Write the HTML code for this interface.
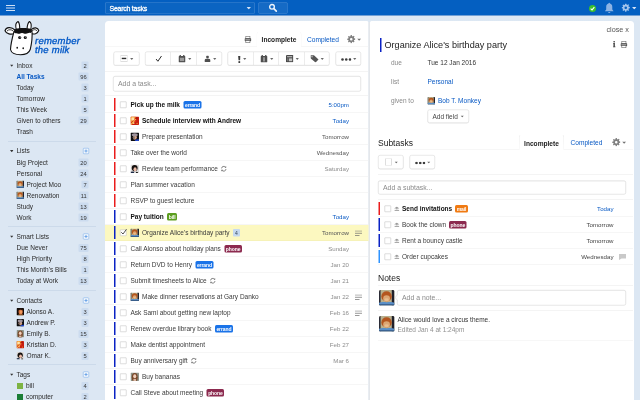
<!DOCTYPE html>
<html lang="en"><head><meta charset="utf-8"><title>Remember The Milk</title>
<style>
html,body{margin:0;padding:0;background:#dce7f3;overflow:hidden;}
body{width:640px;height:400px;position:relative;font-family:"Liberation Sans",sans-serif;}
#app{position:absolute;left:0;top:0;width:1280px;height:800px;transform:scale(0.5);transform-origin:0 0;filter:saturate(1.001);font-size:13px;color:#333;overflow:hidden;}
#app *{box-sizing:border-box;}
.abs{position:absolute;}
#topbar{position:absolute;left:0;top:0;width:1280px;height:31.5px;background:#045fc1;border-bottom:1.500px solid #0a52ab;}
#topshade{position:absolute;left:0;top:31px;width:1280px;height:11px;background:linear-gradient(#dfe8f3,#dfe8f3 60%,#dce7f3);}
.ham i{position:absolute;left:12px;width:18px;height:2px;background:#cfe0f5;}
#search{position:absolute;left:210px;top:5px;width:300px;height:22px;border:1px solid rgba(255,255,255,.26);background:rgba(255,255,255,.03);border-radius:2px;color:#fff;font-weight:normal;-webkit-text-stroke:.55px #fff;letter-spacing:-.5px;font-size:14px;line-height:20px;padding-left:8px;}
#sbtn{position:absolute;left:517px;top:5px;width:58px;height:22px;border:1px solid rgba(255,255,255,.28);background:rgba(255,255,255,.07);border-radius:2px;}
/* sidebar */
.sbrow{position:absolute;left:0;width:210px;height:22px;line-height:22px;font-size:13px;color:#2a2a2a;white-space:nowrap;}
.sbrow .lbl{position:absolute;left:33px;top:0;}
.sbrow .lbl.withav{left:53px;}
.sbrow .lbl.withtag{left:52px;}
.sbrow .av{position:absolute;left:33px;top:3px;}
.sbrow .tagsq{position:absolute;left:34px;top:5px;width:12px;height:12px;}
.sbrow .tri{position:absolute;left:20px;top:9px;}
.sbrow.act .lbl{color:#0859c4;font-weight:bold;}
.sbrow .cnt{position:absolute;right:33px;top:3px;height:16px;line-height:16px;font-size:11.500px;color:#333;background:#ccdcef;padding:0 3.500px;border-radius:2px;min-width:14px;text-align:center;}
.sbrow .plus{position:absolute;left:166px;top:5px;width:12px;height:12px;border:1px solid #6ea6e8;background:#f3f7fc;border-radius:2px;}
.sbrow .plus i{position:absolute;left:2px;top:4px;width:6px;height:2px;background:#6ea6e8;}
.sbrow .plus b{position:absolute;left:4px;top:2px;width:2px;height:6px;background:#6ea6e8;}
.sbdiv{position:absolute;left:16px;width:176px;height:1px;background:#bccde0;}
/* panels */
#main{position:absolute;left:210px;top:42px;width:527px;height:760px;background:#fff;border-radius:7px 3px 0 0;}
#right{position:absolute;left:740px;top:42px;width:528px;height:760px;background:#fff;border-radius:3px 7px 0 0;}
.hline{position:absolute;height:1px;background:#e9e9e9;}
.btn{position:absolute;height:28px;border:1px solid #d4d4d4;border-radius:4px;background:#fff;box-shadow:0 1px 1px rgba(0,0,0,.08);}
.btn .sep{position:absolute;top:0;width:1px;height:26px;background:#d9d9d9;}
.btn svg{position:absolute;}
.inp{position:absolute;border:1px solid #cfcfcf;border-radius:4px;background:#fff;color:#8a8a8a;font-size:13.800px;padding-left:9px;box-shadow:inset 0 1px 1px rgba(0,0,0,.05);}
.tab{position:absolute;border:1px solid #ededed;border-bottom:none;border-radius:4px 4px 0 0;background:#fff;font-weight:bold;color:#222;font-size:13.200px;text-align:center;}
.lnk{color:#0859c4;}
/* task rows */
.trow{position:absolute;left:210px;width:527px;height:32px;line-height:31px;border-bottom:1px solid #ececec;font-size:13px;color:#3a3a3a;white-space:nowrap;padding-left:51px;display:flex;align-items:center;}
.trow.sel{background:#fcf8c0;border-bottom-color:#f0ecb0;}
.trow .pri{position:absolute;left:18px;top:2px;width:3px;height:26px;}
.trow .cb{position:absolute;left:30px;top:9px;width:13px;height:13px;border:1px solid #bdbdbd;background:#fff;border-radius:1px;}
.trow .cb svg{position:absolute;left:-1px;top:-3px;}
.trow .av{margin-right:6px;flex:none;}
.trow .tn.b{font-weight:bold;color:#111;}
.trow .tag{margin-left:7px;height:15px;line-height:15px;font-size:10px;font-weight:bold;color:#fff;padding:0 3px;border-radius:3px;letter-spacing:-.2px;}
.trow .subcnt{margin-left:7px;height:15px;line-height:15px;font-size:10px;color:#345;background:#c5d9f0;padding:0 4px;border-radius:2px;}
.trow .rep{margin-left:5.500px;flex:none;}
.trow .due{position:absolute;right:39px;top:0;color:#8c8c8c;font-size:12.300px;}
.trow .due.nr{color:#555;}
.trow.sub .due.nr{color:#444;}
.trow .due.bl{color:#0859c4;}
.trow .nic{position:absolute;left:500px;top:11px;line-height:0;}
.trow.sub{left:756px;width:510px;padding-left:48px;}
.trow.sub .pri{left:1px;}
.trow.sub .cb{left:13px;}
.trow.sub .subic{position:absolute;left:32px;top:11px;line-height:0;}
.trow.sub .due{right:39px;}
.trow.sub .nic{left:482px;top:10px;}
.trow.sub .tag{margin-left:6px;}
#gap{position:absolute;left:737px;top:44px;width:3px;height:760px;background:#e4e7eb;}

</style></head><body>
<div id="app">
<div id="topbar">
 <div class="ham"><i style="top:10px"></i><i style="top:15px"></i><i style="top:20px"></i></div>
 <div id="search">Search tasks<span class="abs" style="right:7px;top:7.500px;line-height:0"><svg class="caret" width="9" height="5.5" viewBox="0 0 8 5"><path d="M0 0 H8 L4 4.6Z" fill="#d5e4f7"/></svg></span></div>
 <div id="sbtn"><svg class="abs" style="left:17.500px;top:0px" width="20" height="20" viewBox="0 0 20 20"><circle cx="8" cy="7.600" r="4.700" fill="none" stroke="#eef4fc" stroke-width="2.700"/><path d="M11.800 11.400 L16.600 16.200" stroke="#eef4fc" stroke-width="3.300" stroke-linecap="round"/></svg></div>
 <svg class="abs" style="left:1177.500px;top:9.500px" width="14" height="14" viewBox="0 0 15 15"><circle cx="7.500" cy="7.500" r="7.500" fill="#3cbf2c"/><path d="M3.500 7.800 L6.500 10.500 L11.500 4.500" fill="none" stroke="#fff" stroke-width="2.200"/></svg>
 <svg class="abs" style="left:1207px;top:4px" width="23" height="23" viewBox="0 0 20 20"><path d="M10 1.500c.8 0 1.300.5 1.300 1.300 2.600.7 4 2.800 4 5.700v4.500l2 2.500v.8H2.700v-.8l2-2.500V8.500c0-2.900 1.400-5 4-5.700C8.700 2 9.200 1.500 10 1.500z M8 17.300h4a2 2 0 0 1-4 0z" fill="#8db3e4"/></svg>
 <span class="abs" style="left:1242.500px;top:7px;line-height:0"><svg width="17" height="17" viewBox="0 0 16 16"><path fill-rule="evenodd" fill="#a3c4ec" d="M6.9 0h2.2l.4 2.1 1.4.6 1.8-1.2 1.5 1.5-1.200 1.800.6 1.400 2.100.4v2.200l-2.100.4-.6 1.400 1.200 1.800-1.500 1.500-1.800-1.200-1.400.6-.4 2.100H6.900l-.4-2.100-1.400-.6-1.800 1.200-1.500-1.500 1.200-1.800-.6-1.400L.3 9.100V6.900l2.100-.4.6-1.400-1.200-1.800 1.500-1.500 1.800 1.200 1.400-.6zM8 5.600a2.400 2.400 0 1 0 0 4.800 2.400 2.400 0 0 0 0-4.800z"/></svg></span>
 <span class="abs" style="left:1263.500px;top:13.500px;line-height:0"><svg class="caret" width="9" height="5.5" viewBox="0 0 8 5"><path d="M0 0 H8 L4 4.6Z" fill="#d5e4f7"/></svg></span>
</div>
<div id="topshade"></div>

<!-- logo -->
<svg class="abs" style="left:8px;top:40px" width="72" height="74" viewBox="0 0 72 74">
 <g stroke="#111" stroke-width="2.2" stroke-linejoin="round" stroke-linecap="round" fill="#fff">
  <path d="M24.500 19 C22.500 11 24.500 4.500 28 3 C31 5.500 31.500 12 31.500 18Z"/>
  <path d="M46 18 C46.500 11 48 5 51 3 C54.500 5 55 12 53.500 19Z"/>
  <path d="M22 20 C14 12.500 4 14.500 2 21.500 C5 28.500 14 29.500 21 27Z"/>
  <path d="M54 20 C60 13.500 68 15 69.500 21 C67 28 60 29 54.500 27Z"/>
  <path d="M20 23 C26 20 50 20 56 23 C57 34 55 48 52.500 59 C50 66 44 69.500 33 69.500 C22 69.500 14.500 66 13 59 C13.500 47 17 34 20 23Z"/>
 </g>
 <path d="M21.500 19 C27 15 50 15 55 19 C56 22 55 25 53 26 C50 24 47 27 44 27.500 C40 28 39 25 35.500 26 C32 27 30 28.500 27 27 C24 25.500 22 27 20.500 25.500 C20 23 20.500 21 21.500 19Z" fill="#111"/>
 <path d="M6 22 C9 18.500 15 18.500 19 22.500" fill="none" stroke="#111" stroke-width="1.6"/>
 <path d="M66 21.500 C63 18.500 59 18.500 56 22" fill="none" stroke="#111" stroke-width="1.6"/>
 <circle cx="31.400" cy="35" r="3.100" fill="#111"/><circle cx="42.600" cy="35" r="3.100" fill="#111"/>
 <circle cx="32.300" cy="34" r="1" fill="#fff"/><circle cx="43.500" cy="34" r="1" fill="#fff"/>
 <ellipse cx="26.400" cy="55.500" rx="1.600" ry="2" fill="#111"/><ellipse cx="38.400" cy="56.500" rx="1.600" ry="2" fill="#111"/>
</svg>
<div class="abs" style="left:70px;top:73px;font-size:19px;line-height:17px;font-weight:normal;font-style:italic;color:#0058c6;-webkit-text-stroke:0.7px #0058c6;letter-spacing:.45px;white-space:nowrap">remember<br>the milk</div>

<div class="sbrow hdr" style="top:120px"><svg class="tri" width="7" height="5" viewBox="0 0 9 6"><path d="M0 0H9L4.500 5.500Z" fill="#333"/></svg><span class="lbl">Inbox</span><span class="cnt">2</span></div>
<div class="sbrow act" style="top:142px"><span class="lbl">All Tasks</span><span class="cnt">96</span></div>
<div class="sbrow" style="top:164px"><span class="lbl">Today</span><span class="cnt">3</span></div>
<div class="sbrow" style="top:186px"><span class="lbl">Tomorrow</span><span class="cnt">1</span></div>
<div class="sbrow" style="top:208px"><span class="lbl">This Week</span><span class="cnt">5</span></div>
<div class="sbrow" style="top:230px"><span class="lbl">Given to others</span><span class="cnt">29</span></div>
<div class="sbrow" style="top:252px"><span class="lbl">Trash</span></div>
<div class="sbdiv" style="top:282px"></div>
<div class="sbrow hdr" style="top:291px"><svg class="tri" width="7" height="5" viewBox="0 0 9 6"><path d="M0 0H9L4.500 5.500Z" fill="#333"/></svg><span class="lbl">Lists</span><span class="plus"><i></i><b></b></span></div>
<div class="sbrow" style="top:314px"><span class="lbl">Big Project</span><span class="cnt">20</span></div>
<div class="sbrow" style="top:336px"><span class="lbl">Personal</span><span class="cnt">24</span></div>
<div class="sbrow" style="top:358px"><svg class="av" style="border-radius:1.5px" width="15" height="15" viewBox="0 0 16 16"><rect width="16" height="16" fill="#b8b08e"/><rect x="0" y="0" width="1.600" height="16" fill="#2b2b36"/><rect x="13.200" y="0" width="2.800" height="16" fill="#20202b"/><ellipse cx="7.800" cy="6.600" rx="5.400" ry="5.200" fill="#b4561f"/><ellipse cx="7.800" cy="8.800" rx="3.500" ry="3.400" fill="#dca673"/><ellipse cx="7.800" cy="10" rx="2.200" ry="1.500" fill="#e9bd8e"/><path d="M0 16 V13.200 C3 11.800 5 12.600 8 12.600 C11 12.600 13 11.800 16 13.200 V16Z" fill="#5a8fc8"/><rect y="15" width="16" height="1" fill="#1d3557"/></svg><span class="lbl withav">Project Moo</span><span class="cnt">7</span></div>
<div class="sbrow" style="top:380px"><svg class="av" style="border-radius:1.5px" width="15" height="15" viewBox="0 0 16 16"><rect width="16" height="16" fill="#b8b08e"/><rect x="0" y="0" width="1.600" height="16" fill="#2b2b36"/><rect x="13.200" y="0" width="2.800" height="16" fill="#20202b"/><ellipse cx="7.800" cy="6.600" rx="5.400" ry="5.200" fill="#b4561f"/><ellipse cx="7.800" cy="8.800" rx="3.500" ry="3.400" fill="#dca673"/><ellipse cx="7.800" cy="10" rx="2.200" ry="1.500" fill="#e9bd8e"/><path d="M0 16 V13.200 C3 11.800 5 12.600 8 12.600 C11 12.600 13 11.800 16 13.200 V16Z" fill="#5a8fc8"/><rect y="15" width="16" height="1" fill="#1d3557"/></svg><span class="lbl withav">Renovation</span><span class="cnt">11</span></div>
<div class="sbrow" style="top:402px"><span class="lbl">Study</span><span class="cnt">13</span></div>
<div class="sbrow" style="top:424px"><span class="lbl">Work</span><span class="cnt">19</span></div>
<div class="sbdiv" style="top:453px"></div>
<div class="sbrow hdr" style="top:462px"><svg class="tri" width="7" height="5" viewBox="0 0 9 6"><path d="M0 0H9L4.500 5.500Z" fill="#333"/></svg><span class="lbl">Smart Lists</span><span class="plus"><i></i><b></b></span></div>
<div class="sbrow" style="top:485px"><span class="lbl">Due Never</span><span class="cnt">75</span></div>
<div class="sbrow" style="top:507px"><span class="lbl">High Priority</span><span class="cnt">8</span></div>
<div class="sbrow" style="top:529px"><span class="lbl">This Month's Bills</span><span class="cnt">1</span></div>
<div class="sbrow" style="top:551px"><span class="lbl">Today at Work</span><span class="cnt">13</span></div>
<div class="sbdiv" style="top:581px"></div>
<div class="sbrow hdr" style="top:590px"><svg class="tri" width="7" height="5" viewBox="0 0 9 6"><path d="M0 0H9L4.500 5.500Z" fill="#333"/></svg><span class="lbl">Contacts</span><span class="plus"><i></i><b></b></span></div>
<div class="sbrow" style="top:613px"><svg class="av" style="border-radius:1.5px" width="15" height="15" viewBox="0 0 16 16"><rect width="16" height="16" fill="#120b08"/><ellipse cx="8.800" cy="8" rx="4.500" ry="5.800" fill="#d9703a"/><ellipse cx="9.600" cy="8.500" rx="2.600" ry="3.600" fill="#f09a5e"/><path d="M4 3.500 C6 0.500 12 0.500 13.500 4 L12 5 C10 3.500 7 3.500 5 5Z" fill="#2a1710"/><rect x="4" y="14" width="10" height="2" fill="#e08a3a"/></svg><span class="lbl withav">Alonso A.</span><span class="cnt">3</span></div>
<div class="sbrow" style="top:635px"><svg class="av" style="border-radius:1.5px" width="15" height="15" viewBox="0 0 16 16"><rect width="16" height="16" fill="#0e0e10"/><ellipse cx="8.200" cy="9" rx="3.700" ry="4.600" fill="#d3a287"/><ellipse cx="6.300" cy="9.500" rx="1.700" ry="3.600" fill="#7f6a62"/><ellipse cx="8" cy="4.300" rx="5.600" ry="3" fill="#a0949c"/><path d="M8 16 L10 13 L16 12.500 V16Z" fill="#2348cc"/></svg><span class="lbl withav">Andrew P.</span><span class="cnt">3</span></div>
<div class="sbrow" style="top:657px"><svg class="av" style="border-radius:1.5px" width="15" height="15" viewBox="0 0 16 16"><rect width="16" height="16" fill="#8f968b"/><ellipse cx="8" cy="9" rx="5.600" ry="8" fill="#7a492b"/><ellipse cx="8" cy="7" rx="2.900" ry="3.700" fill="#f1d0bb"/><rect x="5.500" y="12" width="5" height="4" fill="#d9b8a4"/></svg><span class="lbl withav">Emily B.</span><span class="cnt">15</span></div>
<div class="sbrow" style="top:679px"><svg class="av" style="border-radius:1.5px" width="15" height="15" viewBox="0 0 16 16"><rect width="16" height="16" fill="#c71d10"/><path d="M0 0H11L0 12Z" fill="#f6a13a"/><circle cx="4.500" cy="4.500" r="3" fill="#ffe3a6"/><path d="M1 15 L10 5" stroke="#f7b64c" stroke-width="2.400"/><circle cx="9.500" cy="8.500" r="1.800" fill="#e0301a"/><circle cx="12" cy="3" r="1.600" fill="#a3140c"/><circle cx="6" cy="12.500" r="1.500" fill="#ffd98f"/><circle cx="12.500" cy="13" r="1.400" fill="#f08a2a"/></svg><span class="lbl withav">Kristian D.</span><span class="cnt">3</span></div>
<div class="sbrow" style="top:701px"><svg class="av" style="border-radius:1.5px" width="15" height="15" viewBox="0 0 16 16"><rect width="16" height="16" fill="#dedcda"/><ellipse cx="7.800" cy="6.800" rx="5.600" ry="5.800" fill="#15100e"/><ellipse cx="8.600" cy="9" rx="3" ry="3.900" fill="#ebbaa6"/><path d="M0 16 V13.500 L6 13 L7 16Z" fill="#1d2b48"/><path d="M10 16 L11 13.500 L14 14.500 V16Z" fill="#111"/></svg><span class="lbl withav">Omar K.</span><span class="cnt">5</span></div>
<div class="sbdiv" style="top:729px"></div>
<div class="sbrow hdr" style="top:738px"><svg class="tri" width="7" height="5" viewBox="0 0 9 6"><path d="M0 0H9L4.500 5.500Z" fill="#333"/></svg><span class="lbl">Tags</span><span class="plus"><i></i><b></b></span></div>
<div class="sbrow" style="top:761px"><span class="tagsq" style="background:#7db343"></span><span class="lbl withtag">bill</span><span class="cnt">4</span></div>
<div class="sbrow" style="top:783px"><span class="tagsq" style="background:#1a7d36"></span><span class="lbl withtag">computer</span><span class="cnt">2</span></div>

<div id="main"></div>
<div id="right"></div>
<div id="gap"></div>

<!-- main header -->
<span class="abs" style="left:489px;top:72px;line-height:0"><svg width="13.500" height="14" viewBox="0 0 13.500 14"><rect x="2.600" y="0.600" width="8.300" height="5" fill="#fff" stroke="#6a6a6a" stroke-width="1.200"/><rect x="0" y="4.600" width="13.500" height="6" rx="1.600" fill="#4d4d4d"/><rect x="1.800" y="7" width="9.900" height="1" fill="#e6e6e6"/><rect x="2.600" y="9.200" width="8.300" height="4.200" fill="#fff" stroke="#6a6a6a" stroke-width="1.200"/></svg></span>
<div class="tab" style="left:513px;top:64px;width:90px;height:30px;line-height:30px">Incomplete</div>
<div class="abs lnk" style="left:614px;top:65px;font-size:13.200px;line-height:28px">Completed</div>
<span class="abs" style="left:694px;top:70px;line-height:0"><svg width="17" height="17" viewBox="0 0 16 16"><path fill-rule="evenodd" fill="#808080" d="M6.9 0h2.2l.4 2.1 1.4.6 1.8-1.2 1.5 1.5-1.200 1.800.6 1.400 2.100.4v2.200l-2.100.4-.6 1.400 1.200 1.800-1.500 1.500-1.800-1.200-1.400.6-.4 2.100H6.900l-.4-2.100-1.400-.6-1.800 1.200-1.500-1.500 1.200-1.800-.6-1.400L.3 9.100V6.900l2.100-.4.6-1.400-1.200-1.800 1.500-1.500 1.800 1.200 1.400-.6zM8 5.600a2.400 2.400 0 1 0 0 4.800 2.400 2.400 0 0 0 0-4.800z"/></svg></span>
<span class="abs" style="left:713.500px;top:76.500px;line-height:0"><svg class="caret" width="8.5" height="5" viewBox="0 0 8 5"><path d="M0 0 H8 L4 4.6Z" fill="#707070"/></svg></span>
<div class="hline" style="left:210px;top:93px;width:527px;background:#eeeeee"></div>
<div class="tab" style="left:513px;top:64px;width:90px;height:30px;line-height:30px;border-color:transparent;border-left-color:#ededed;border-right-color:#ededed;background:#fff">Incomplete</div>

<!-- toolbar -->
<div class="btn" style="left:227px;top:103px;width:52px">
 <svg style="left:13px;top:6px" width="14" height="14" viewBox="0 0 14 14"><rect x=".5" y=".5" width="13" height="13" fill="#fff" stroke="#bdbdbd"/><rect x="2.500" y="5.500" width="9" height="2.800" fill="#2e2e2e"/></svg>
 <span class="abs" style="left:32px;top:12px;line-height:0"><svg class="caret" width="7" height="4" viewBox="0 0 8 5"><path d="M0 0 H8 L4 4.800Z" fill="#6a6a6a"/></svg></span>
</div>
<div class="btn" style="left:290px;top:103px;width:154px">
 <i class="sep" style="left:50px"></i><i class="sep" style="left:102px"></i>
 <svg style="left:20px;top:7px" width="13" height="13" viewBox="0 0 13 13"><path d="M1 7 L4.800 11.500 L12 1" fill="none" stroke="#222" stroke-width="1.900"/></svg>
 <svg style="left:66px;top:6px" width="14" height="15" viewBox="0 0 14 15"><rect x="0" y="2" width="14" height="13" rx="1.500" fill="#4f4f4f"/><rect x="2.200" y="0" width="2.600" height="4" fill="#4f4f4f"/><rect x="9.200" y="0" width="2.600" height="4" fill="#4f4f4f"/><rect x="2.800" y="5.500" width="8.400" height="6.700" fill="#9c9c9c"/></svg>
 <span class="abs" style="left:85px;top:12px;line-height:0"><svg class="caret" width="7" height="4" viewBox="0 0 8 5"><path d="M0 0 H8 L4 4.800Z" fill="#6a6a6a"/></svg></span>
 <svg style="left:118px;top:7px" width="12" height="13" viewBox="0 0 12 13"><circle cx="6" cy="3" r="2.800" fill="#4f4f4f"/><path d="M0 13 V9.500 C0 7.300 2.500 6.600 6 6.600 C9.500 6.600 12 7.300 12 9.500 V13Z" fill="#4f4f4f"/></svg>
 <span class="abs" style="left:134.5px;top:12px;line-height:0"><svg class="caret" width="7" height="4" viewBox="0 0 8 5"><path d="M0 0 H8 L4 4.800Z" fill="#6a6a6a"/></svg></span>
</div>
<div class="btn" style="left:455px;top:103px;width:204px">
 <i class="sep" style="left:50px"></i><i class="sep" style="left:100px"></i><i class="sep" style="left:152px"></i>
 <svg style="left:19.500px;top:7.500px" width="5.500" height="14" viewBox="0 0 5.500 14"><path d="M.3 0h4.900L4.400 8.600H1.100z" fill="#3c3c3c"/><rect x=".9" y="10.300" width="3.700" height="3.700" fill="#3c3c3c"/></svg>
 <span class="abs" style="left:30px;top:12px;line-height:0"><svg class="caret" width="7" height="4" viewBox="0 0 8 5"><path d="M0 0 H8 L4 4.800Z" fill="#6a6a6a"/></svg></span>
 <svg style="left:65px;top:6px" width="14" height="15" viewBox="0 0 14 15"><rect x="0" y="2" width="14" height="13" rx="1.500" fill="#4f4f4f"/><rect x="2.200" y="0" width="2.600" height="4" fill="#4f4f4f"/><rect x="9.200" y="0" width="2.600" height="4" fill="#4f4f4f"/><rect x="5.400" y="4.500" width="3.200" height="8.500" fill="#a8a8a8"/></svg>
 <span class="abs" style="left:84px;top:12px;line-height:0"><svg class="caret" width="7" height="4" viewBox="0 0 8 5"><path d="M0 0 H8 L4 4.800Z" fill="#6a6a6a"/></svg></span>
 <svg style="left:116px;top:6px" width="14.500" height="14.500" viewBox="0 0 15 15"><rect width="15" height="15" rx="1" fill="#4a4a4a"/><rect x="2.200" y="2.200" width="10.600" height="2.600" fill="#b5b5b5"/><rect x="5.800" y="7" width="7" height="5.800" fill="#c4c4c4"/><rect x="2.200" y="7" width="2" height="5.800" fill="#7a7a7a"/></svg>
 <span class="abs" style="left:135px;top:12px;line-height:0"><svg class="caret" width="7" height="4" viewBox="0 0 8 5"><path d="M0 0 H8 L4 4.800Z" fill="#6a6a6a"/></svg></span>
 <svg style="left:165px;top:6px" width="16.500" height="15" viewBox="0 0 18 16"><path d="M0 0.500 H7.500 L17.500 9.500 L11 16 L0 7Z M3.300 2.300a1.400 1.400 0 1 0 .01 0z" fill="#555" fill-rule="evenodd"/></svg>
 <span class="abs" style="left:185px;top:12px;line-height:0"><svg class="caret" width="7" height="4" viewBox="0 0 8 5"><path d="M0 0 H8 L4 4.800Z" fill="#6a6a6a"/></svg></span>
</div>
<div class="btn" style="left:671px;top:103px;width:51px">
 <svg style="left:9.500px;top:12px" width="21" height="6" viewBox="0 0 21 6"><circle cx="3" cy="3" r="2.600" fill="#3c3c3c"/><circle cx="10.500" cy="3" r="2.600" fill="#3c3c3c"/><circle cx="18" cy="3" r="2.600" fill="#3c3c3c"/></svg>
 <span class="abs" style="left:33.5px;top:12px;line-height:0"><svg class="caret" width="7" height="4" viewBox="0 0 8 5"><path d="M0 0 H8 L4 4.800Z" fill="#6a6a6a"/></svg></span>
</div>
<div class="hline" style="left:210px;top:142px;width:527px"></div>
<div class="inp" style="left:226px;top:152px;width:496px;height:31px;line-height:29px">Add a task...</div>
<div class="hline" style="left:210px;top:191px;width:527px"></div>
<div class="trow" style="top:194px"><span class="pri" style="background:#ea1c1c"></span><span class="cb"></span><span class="tn b">Pick up the milk</span><span class="tag" style="background:#1a73e8">errand</span><span class="due bl">5:00pm</span></div><div class="trow" style="top:226px"><span class="pri" style="background:#ea1c1c"></span><span class="cb"></span><svg class="av" style="border-radius:1.5px" width="17" height="17" viewBox="0 0 16 16"><rect width="16" height="16" fill="#c71d10"/><path d="M0 0H11L0 12Z" fill="#f6a13a"/><circle cx="4.500" cy="4.500" r="3" fill="#ffe3a6"/><path d="M1 15 L10 5" stroke="#f7b64c" stroke-width="2.400"/><circle cx="9.500" cy="8.500" r="1.800" fill="#e0301a"/><circle cx="12" cy="3" r="1.600" fill="#a3140c"/><circle cx="6" cy="12.500" r="1.500" fill="#ffd98f"/><circle cx="12.500" cy="13" r="1.400" fill="#f08a2a"/></svg><span class="tn b">Schedule interview with Andrew</span><span class="due bl">Today</span></div><div class="trow" style="top:258px"><span class="pri" style="background:#ea1c1c"></span><span class="cb"></span><svg class="av" style="border-radius:1.5px" width="17" height="17" viewBox="0 0 16 16"><rect width="16" height="16" fill="#0e0e10"/><ellipse cx="8.200" cy="9" rx="3.700" ry="4.600" fill="#d3a287"/><ellipse cx="6.300" cy="9.500" rx="1.700" ry="3.600" fill="#7f6a62"/><ellipse cx="8" cy="4.300" rx="5.600" ry="3" fill="#a0949c"/><path d="M8 16 L10 13 L16 12.500 V16Z" fill="#2348cc"/></svg><span class="tn">Prepare presentation</span><span class="due nr">Tomorrow</span></div><div class="trow" style="top:290px"><span class="pri" style="background:#ea1c1c"></span><span class="cb"></span><span class="tn">Take over the world</span><span class="due nr">Wednesday</span></div><div class="trow" style="top:322px"><span class="pri" style="background:#ea1c1c"></span><span class="cb"></span><svg class="av" style="border-radius:1.5px" width="17" height="17" viewBox="0 0 16 16"><rect width="16" height="16" fill="#dedcda"/><ellipse cx="7.800" cy="6.800" rx="5.600" ry="5.800" fill="#15100e"/><ellipse cx="8.600" cy="9" rx="3" ry="3.900" fill="#ebbaa6"/><path d="M0 16 V13.500 L6 13 L7 16Z" fill="#1d2b48"/><path d="M10 16 L11 13.500 L14 14.500 V16Z" fill="#111"/></svg><span class="tn">Review team performance</span><svg class="rep" width="13" height="13" viewBox="0 0 14 14"><g fill="none" stroke="#6e6e6e" stroke-width="1.900"><path d="M2.2 6.2 A4.9 4.9 0 0 1 10.8 3.6"/><path d="M11.8 7.8 A4.9 4.9 0 0 1 3.2 10.4"/></g><path d="M8.6 4.6 L12.4 4.9 L12.1 1.2Z" fill="#6e6e6e"/><path d="M5.4 9.4 L1.6 9.1 L1.9 12.8Z" fill="#6e6e6e"/></svg><span class="due">Saturday</span></div><div class="trow" style="top:354px"><span class="pri" style="background:#ea1c1c"></span><span class="cb"></span><span class="tn">Plan summer vacation</span></div><div class="trow" style="top:386px"><span class="pri" style="background:#ea1c1c"></span><span class="cb"></span><span class="tn">RSVP to guest lecture</span></div><div class="trow" style="top:418px"><span class="pri" style="background:#0a22c4"></span><span class="cb"></span><span class="tn b">Pay tuition</span><span class="tag" style="background:#5c9e1f">bill</span><span class="due bl">Today</span></div><div class="trow sel" style="top:450px"><span class="pri" style="background:#0a22c4"></span><span class="cb"><svg width="15" height="14" viewBox="0 0 15 14"><path d="M2.500 7.500 L6 11 L13 1.500" fill="none" stroke="#222" stroke-width="1.600"/></svg></span><svg class="av" style="border-radius:1.5px" width="17" height="17" viewBox="0 0 16 16"><rect width="16" height="16" fill="#b8b08e"/><rect x="0" y="0" width="1.600" height="16" fill="#2b2b36"/><rect x="13.200" y="0" width="2.800" height="16" fill="#20202b"/><ellipse cx="7.800" cy="6.600" rx="5.400" ry="5.200" fill="#b4561f"/><ellipse cx="7.800" cy="8.800" rx="3.500" ry="3.400" fill="#dca673"/><ellipse cx="7.800" cy="10" rx="2.200" ry="1.500" fill="#e9bd8e"/><path d="M0 16 V13.200 C3 11.800 5 12.600 8 12.600 C11 12.600 13 11.800 16 13.200 V16Z" fill="#5a8fc8"/><rect y="15" width="16" height="1" fill="#1d3557"/></svg><span class="tn">Organize Alice's birthday party</span><span class="subcnt">4</span><span class="due nr">Tomorrow</span><span class="nic"><svg width="14" height="11" viewBox="0 0 14 11"><g fill="#6d6d6d"><rect x="0" y="0.200" width="14" height="1.400"/><rect x="0" y="4.700" width="14" height="1.400"/><rect x="0" y="9.200" width="9" height="1.400"/></g></svg></span></div><div class="trow" style="top:482px"><span class="pri" style="background:#0a22c4"></span><span class="cb"></span><span class="tn">Call Alonso about holiday plans</span><span class="tag" style="background:#8c2a4f">phone</span><span class="due">Sunday</span></div><div class="trow" style="top:514px"><span class="pri" style="background:#0a22c4"></span><span class="cb"></span><span class="tn">Return DVD to Henry</span><span class="tag" style="background:#1a73e8">errand</span><span class="due">Jan 20</span></div><div class="trow" style="top:546px"><span class="pri" style="background:#0a22c4"></span><span class="cb"></span><span class="tn">Submit timesheets to Alice</span><svg class="rep" width="13" height="13" viewBox="0 0 14 14"><g fill="none" stroke="#6e6e6e" stroke-width="1.900"><path d="M2.2 6.2 A4.9 4.9 0 0 1 10.8 3.6"/><path d="M11.8 7.8 A4.9 4.9 0 0 1 3.2 10.4"/></g><path d="M8.6 4.6 L12.4 4.9 L12.1 1.2Z" fill="#6e6e6e"/><path d="M5.4 9.4 L1.6 9.1 L1.9 12.8Z" fill="#6e6e6e"/></svg><span class="due">Jan 21</span></div><div class="trow" style="top:578px"><span class="pri" style="background:#0a22c4"></span><span class="cb"></span><svg class="av" style="border-radius:1.5px" width="17" height="17" viewBox="0 0 16 16"><rect width="16" height="16" fill="#b8b08e"/><rect x="0" y="0" width="1.600" height="16" fill="#2b2b36"/><rect x="13.200" y="0" width="2.800" height="16" fill="#20202b"/><ellipse cx="7.800" cy="6.600" rx="5.400" ry="5.200" fill="#b4561f"/><ellipse cx="7.800" cy="8.800" rx="3.500" ry="3.400" fill="#dca673"/><ellipse cx="7.800" cy="10" rx="2.200" ry="1.500" fill="#e9bd8e"/><path d="M0 16 V13.200 C3 11.800 5 12.600 8 12.600 C11 12.600 13 11.800 16 13.200 V16Z" fill="#5a8fc8"/><rect y="15" width="16" height="1" fill="#1d3557"/></svg><span class="tn">Make dinner reservations at Gary Danko</span><span class="due">Jan 22</span><span class="nic"><svg width="14" height="11" viewBox="0 0 14 11"><g fill="#6d6d6d"><rect x="0" y="0.200" width="14" height="1.400"/><rect x="0" y="4.700" width="14" height="1.400"/><rect x="0" y="9.200" width="9" height="1.400"/></g></svg></span></div><div class="trow" style="top:610px"><span class="pri" style="background:#0a22c4"></span><span class="cb"></span><span class="tn">Ask Sami about getting new laptop</span><span class="due">Feb 16</span><span class="nic"><svg width="14" height="11" viewBox="0 0 14 11"><g fill="#6d6d6d"><rect x="0" y="0.200" width="14" height="1.400"/><rect x="0" y="4.700" width="14" height="1.400"/><rect x="0" y="9.200" width="9" height="1.400"/></g></svg></span></div><div class="trow" style="top:642px"><span class="pri" style="background:#0a22c4"></span><span class="cb"></span><span class="tn">Renew overdue library book</span><span class="tag" style="background:#1a73e8">errand</span><span class="due">Feb 22</span></div><div class="trow" style="top:674px"><span class="pri" style="background:#0a22c4"></span><span class="cb"></span><span class="tn">Make dentist appointment</span><span class="due">Feb 27</span></div><div class="trow" style="top:706px"><span class="pri" style="background:#0a22c4"></span><span class="cb"></span><span class="tn">Buy anniversary gift</span><svg class="rep" width="13" height="13" viewBox="0 0 14 14"><g fill="none" stroke="#6e6e6e" stroke-width="1.900"><path d="M2.2 6.2 A4.9 4.9 0 0 1 10.8 3.6"/><path d="M11.8 7.8 A4.9 4.9 0 0 1 3.2 10.4"/></g><path d="M8.6 4.6 L12.4 4.9 L12.1 1.2Z" fill="#6e6e6e"/><path d="M5.4 9.4 L1.6 9.1 L1.9 12.8Z" fill="#6e6e6e"/></svg><span class="due">Mar 6</span></div><div class="trow" style="top:738px"><span class="pri" style="background:#0a22c4"></span><span class="cb"></span><svg class="av" style="border-radius:1.5px" width="17" height="17" viewBox="0 0 16 16"><rect width="16" height="16" fill="#8f968b"/><ellipse cx="8" cy="9" rx="5.600" ry="8" fill="#7a492b"/><ellipse cx="8" cy="7" rx="2.900" ry="3.700" fill="#f1d0bb"/><rect x="5.500" y="12" width="5" height="4" fill="#d9b8a4"/></svg><span class="tn">Buy bananas</span></div><div class="trow" style="top:770px"><span class="pri" style="background:#0a22c4"></span><span class="cb"></span><span class="tn">Call Steve about meeting</span><span class="tag" style="background:#8c2a4f">phone</span></div>

<!-- right panel -->
<div class="abs" style="left:1160px;top:50px;width:98px;text-align:right;font-size:14.500px;color:#555;line-height:18px">close x</div>
<div class="abs" style="left:760px;top:76px;width:3px;height:28px;background:#0a22c4"></div>
<div class="abs" style="left:769px;top:76px;font-size:18.200px;line-height:28px;color:#222;white-space:nowrap">Organize Alice's birthday party</div>
<div class="abs" style="left:1226px;top:80px;font-family:'Liberation Serif',serif;font-weight:bold;font-size:17px;line-height:18px;color:#444;-webkit-text-stroke:.5px #444">i</div>
<span class="abs" style="left:1241px;top:82px;line-height:0"><svg width="13.500" height="14" viewBox="0 0 13.500 14"><rect x="2.600" y="0.600" width="8.300" height="5" fill="#fff" stroke="#6a6a6a" stroke-width="1.200"/><rect x="0" y="4.600" width="13.500" height="6" rx="1.600" fill="#4d4d4d"/><rect x="1.800" y="7" width="9.900" height="1" fill="#e6e6e6"/><rect x="2.600" y="9.200" width="8.300" height="4.200" fill="#fff" stroke="#6a6a6a" stroke-width="1.200"/></svg></span>
<div class="abs" style="left:782px;top:115px;font-size:13px;line-height:20px;color:#888">due</div>
<div class="abs" style="left:855px;top:115px;font-size:13px;line-height:20px;color:#333">Tue 12 Jan 2016</div>
<div class="abs" style="left:782px;top:153px;font-size:13px;line-height:20px;color:#888">list</div>
<div class="abs lnk" style="left:855px;top:153px;font-size:13px;line-height:20px">Personal</div>
<div class="abs" style="left:782px;top:191px;font-size:13px;line-height:20px;color:#888">given to</div>
<span class="abs" style="left:855px;top:194px;line-height:0"><svg class="av" style="border-radius:1.5px" width="15" height="15" viewBox="0 0 16 16"><rect width="16" height="16" fill="#b8b08e"/><rect x="0" y="0" width="1.600" height="16" fill="#2b2b36"/><rect x="13.200" y="0" width="2.800" height="16" fill="#20202b"/><ellipse cx="7.800" cy="6.600" rx="5.400" ry="5.200" fill="#b4561f"/><ellipse cx="7.800" cy="8.800" rx="3.500" ry="3.400" fill="#dca673"/><ellipse cx="7.800" cy="10" rx="2.200" ry="1.500" fill="#e9bd8e"/><path d="M0 16 V13.200 C3 11.800 5 12.600 8 12.600 C11 12.600 13 11.800 16 13.200 V16Z" fill="#5a8fc8"/><rect y="15" width="16" height="1" fill="#1d3557"/></svg></span>
<div class="abs lnk" style="left:876px;top:191px;font-size:13px;line-height:20px">Bob T. Monkey</div>
<div class="btn" style="left:855px;top:219px;width:83px;height:27px;font-size:13px;line-height:25px;color:#444;padding-left:9px">Add field<span class="abs" style="left:65px;top:11px;line-height:0"><svg class="caret" width="7" height="4" viewBox="0 0 8 5"><path d="M0 0 H8 L4 4.800Z" fill="#6a6a6a"/></svg></span></div>

<div class="abs" style="left:756px;top:274px;font-size:17px;line-height:24px;color:#222">Subtasks</div>
<div class="tab" style="left:1038px;top:270px;width:90px;height:30px;line-height:31px">Incomplete</div>
<div class="abs lnk" style="left:1141px;top:272px;font-size:13.200px;line-height:28px">Completed</div>
<span class="abs" style="left:1224px;top:276px;line-height:0"><svg width="17" height="17" viewBox="0 0 16 16"><path fill-rule="evenodd" fill="#808080" d="M6.9 0h2.2l.4 2.1 1.4.6 1.8-1.2 1.5 1.5-1.200 1.800.6 1.400 2.100.4v2.200l-2.100.4-.6 1.400 1.200 1.800-1.500 1.500-1.800-1.200-1.400.6-.4 2.100H6.900l-.4-2.100-1.400-.6-1.800 1.200-1.500-1.500 1.200-1.800-.6-1.400L.3 9.100V6.900l2.100-.4.6-1.400-1.200-1.800 1.500-1.500 1.800 1.200 1.400-.6zM8 5.600a2.400 2.400 0 1 0 0 4.800 2.400 2.400 0 0 0 0-4.800z"/></svg></span>
<span class="abs" style="left:1243.500px;top:282.500px;line-height:0"><svg class="caret" width="8.5" height="5" viewBox="0 0 8 5"><path d="M0 0 H8 L4 4.6Z" fill="#707070"/></svg></span>
<div class="hline" style="left:756px;top:299px;width:510px;background:#eeeeee"></div>
<div class="tab" style="left:1038px;top:270px;width:90px;height:30px;line-height:31px;border-color:transparent;border-left-color:#ededed;border-right-color:#ededed">Incomplete</div>
<div class="btn" style="left:756px;top:310px;width:51px">
 <svg style="left:13px;top:6px" width="14" height="14" viewBox="0 0 14 14"><rect x=".5" y=".5" width="13" height="13" fill="#fff" stroke="#bdbdbd"/></svg>
 <span class="abs" style="left:32px;top:12px;line-height:0"><svg class="caret" width="7" height="4" viewBox="0 0 8 5"><path d="M0 0 H8 L4 4.800Z" fill="#6a6a6a"/></svg></span>
</div>
<div class="btn" style="left:819px;top:310px;width:51px">
 <svg style="left:9.500px;top:12px" width="21" height="6" viewBox="0 0 21 6"><circle cx="3" cy="3" r="2.600" fill="#3c3c3c"/><circle cx="10.500" cy="3" r="2.600" fill="#3c3c3c"/><circle cx="18" cy="3" r="2.600" fill="#3c3c3c"/></svg>
 <span class="abs" style="left:33.500px;top:12px;line-height:0"><svg class="caret" width="7" height="4" viewBox="0 0 8 5"><path d="M0 0 H8 L4 4.800Z" fill="#6a6a6a"/></svg></span>
</div>
<div class="hline" style="left:756px;top:348px;width:510px"></div>
<div class="inp" style="left:756px;top:361px;width:496px;height:28px;line-height:26px">Add a subtask...</div>
<div class="hline" style="left:756px;top:398px;width:510px"></div>
<div class="trow sub" style="top:402px"><span class="pri" style="background:#ea1c1c"></span><span class="cb"></span><span class="subic"><svg width="11" height="9" viewBox="0 0 11 9"><g fill="#9b9b9b"><path d="M5.500 0 L10.600 3.800 H0.400Z"/><rect x="3.900" y="3.600" width="3.200" height="2"/><rect x="1.200" y="6.800" width="9.200" height="1.900"/></g></svg></span><span class="tn b">Send invitations</span><span class="tag" style="background:#f07a12">mail</span><span class="due bl">Today</span></div><div class="trow sub" style="top:434px"><span class="pri" style="background:#0a22c4"></span><span class="cb"></span><span class="subic"><svg width="11" height="9" viewBox="0 0 11 9"><g fill="#9b9b9b"><path d="M5.500 0 L10.600 3.800 H0.400Z"/><rect x="3.900" y="3.600" width="3.200" height="2"/><rect x="1.200" y="6.800" width="9.200" height="1.900"/></g></svg></span><span class="tn">Book the clown</span><span class="tag" style="background:#8c2a4f">phone</span><span class="due nr">Tomorrow</span></div><div class="trow sub" style="top:466px"><span class="pri" style="background:#0a22c4"></span><span class="cb"></span><span class="subic"><svg width="11" height="9" viewBox="0 0 11 9"><g fill="#9b9b9b"><path d="M5.500 0 L10.600 3.800 H0.400Z"/><rect x="3.900" y="3.600" width="3.200" height="2"/><rect x="1.200" y="6.800" width="9.200" height="1.900"/></g></svg></span><span class="tn">Rent a bouncy castle</span><span class="due nr">Tomorrow</span></div><div class="trow sub" style="top:498px"><span class="pri" style="background:#2f93ff"></span><span class="cb"></span><span class="subic"><svg width="11" height="9" viewBox="0 0 11 9"><g fill="#9b9b9b"><path d="M5.500 0 L10.600 3.800 H0.400Z"/><rect x="3.900" y="3.600" width="3.200" height="2"/><rect x="1.200" y="6.800" width="9.200" height="1.900"/></g></svg></span><span class="tn">Order cupcakes</span><span class="due nr">Wednesday</span><span class="nic"><svg width="14" height="12" viewBox="0 0 14 12"><path d="M0 0H14V9H5L0 12Z" fill="#c9c9c9"/></svg></span></div>
<div class="abs" style="left:756px;top:544px;font-size:17px;line-height:24px;color:#222">Notes</div>
<div class="hline" style="left:756px;top:571px;width:510px"></div>
<span class="abs" style="left:758px;top:580px;line-height:0"><svg class="av" style="border-radius:3px" width="31" height="31" viewBox="0 0 16 16"><rect width="16" height="16" fill="#b8b08e"/><rect x="0" y="0" width="1.600" height="16" fill="#2b2b36"/><rect x="13.200" y="0" width="2.800" height="16" fill="#20202b"/><ellipse cx="7.800" cy="6.600" rx="5.400" ry="5.200" fill="#b4561f"/><ellipse cx="7.800" cy="8.800" rx="3.500" ry="3.400" fill="#dca673"/><ellipse cx="7.800" cy="10" rx="2.200" ry="1.500" fill="#e9bd8e"/><path d="M0 16 V13.200 C3 11.800 5 12.600 8 12.600 C11 12.600 13 11.800 16 13.200 V16Z" fill="#5a8fc8"/><rect y="15" width="16" height="1" fill="#1d3557"/></svg></span>
<div class="inp" style="left:794px;top:580px;width:458px;height:31px;line-height:29px">Add a note...</div>
<svg class="abs" style="left:789px;top:589px" width="7" height="12" viewBox="0 0 7 12"><path d="M6.500 0.500 L0.800 6 L6.500 11.500" fill="#fff" stroke="#cfcfcf" stroke-width="1"/><rect x="5.800" y="1.500" width="1.400" height="9" fill="#fff"/></svg>
<div class="hline" style="left:756px;top:620px;width:510px"></div>
<span class="abs" style="left:758px;top:632px;line-height:0"><svg class="av" style="border-radius:3px" width="31" height="31" viewBox="0 0 16 16"><rect width="16" height="16" fill="#b8b08e"/><rect x="0" y="0" width="1.600" height="16" fill="#2b2b36"/><rect x="13.200" y="0" width="2.800" height="16" fill="#20202b"/><ellipse cx="7.800" cy="6.600" rx="5.400" ry="5.200" fill="#b4561f"/><ellipse cx="7.800" cy="8.800" rx="3.500" ry="3.400" fill="#dca673"/><ellipse cx="7.800" cy="10" rx="2.200" ry="1.500" fill="#e9bd8e"/><path d="M0 16 V13.200 C3 11.800 5 12.600 8 12.600 C11 12.600 13 11.800 16 13.200 V16Z" fill="#5a8fc8"/><rect y="15" width="16" height="1" fill="#1d3557"/></svg></span>
<div class="abs" style="left:795px;top:630px;font-size:13px;line-height:20px;color:#333">Alice would love a circus theme.</div>
<div class="abs" style="left:795px;top:650px;font-size:13px;line-height:20px;color:#909090">Edited Jan 4 at 1:24pm</div>
<div class="hline" style="left:756px;top:680px;width:510px;background:#efefef"></div>
</div>
</body></html>
